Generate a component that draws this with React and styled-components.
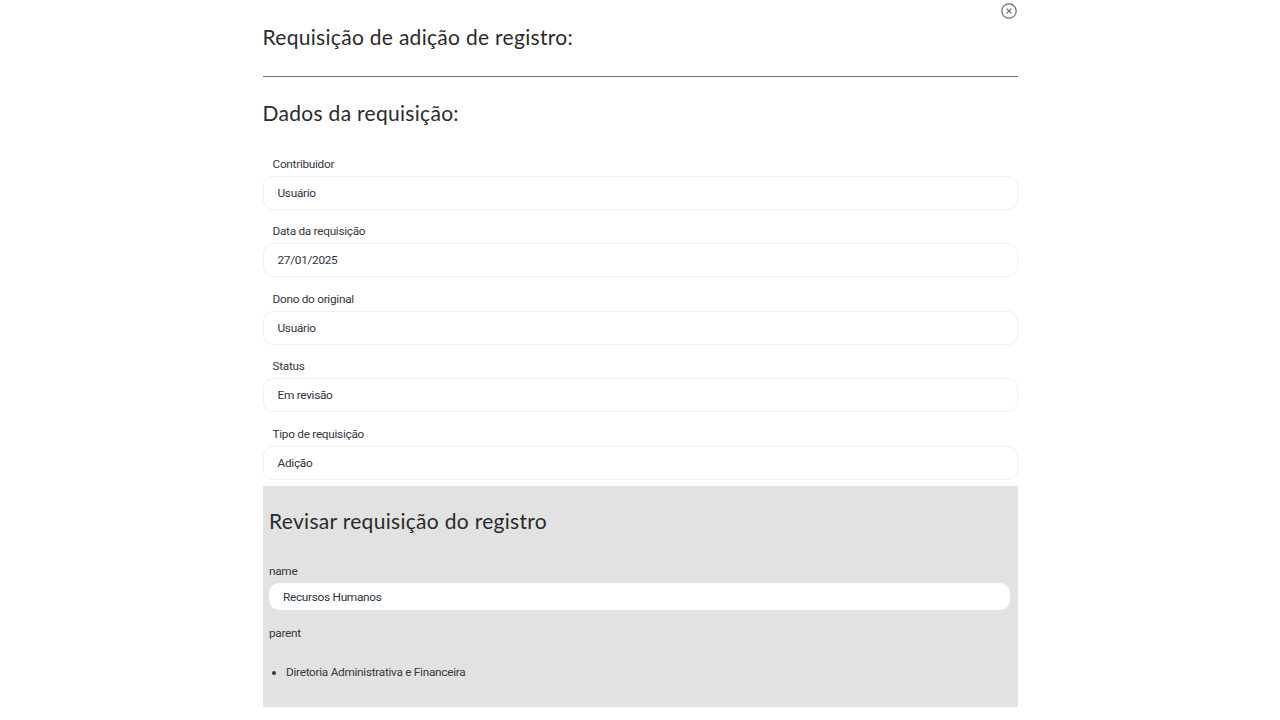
import React from 'react'
import styled, { createGlobalStyle } from 'styled-components'

const GlobalStyle = createGlobalStyle`
    html, body {
        margin: 0;
        padding: 0;
        background-color: #ffffff;
        overflow: hidden;
    }
`

const Page = styled.div`
    width: 1280px;
    height: 720px;
    display: flex;
    justify-content: center;
    overflow: hidden;
`

const Modal = styled.div`
    width: 755px;
    position: relative;
    display: flex;
    flex-direction: column;
`

const CloseButton = styled.button`
    position: absolute;
    top: 2px;
    right: 0;
    width: 18px;
    height: 18px;
    padding: 0;
    border: none;
    background: none;
    display: flex;
    cursor: pointer;
`

const Title = styled.h2`
    margin: 0;
    height: 77px;
    padding-top: 23px;
    box-sizing: border-box;
    font-family: "Lato", sans-serif;
    font-weight: 400;
    font-size: 21px;
    line-height: 27px;
    letter-spacing: 0.3px;
    color: #2b2b2b;
    border-bottom: 1px solid #6f7278;
`

const SectionTitle = styled.h3`
    margin: 0;
    padding-top: 22px;
    font-family: "Lato", sans-serif;
    font-weight: 400;
    font-size: 21px;
    line-height: 27px;
    letter-spacing: 0.3px;
    color: #2b2b2b;
`

const Fields = styled.div`
    display: flex;
    flex-direction: column;
    gap: 11.5px;
    padding-top: 27.5px;
`

const Field = styled.div`
    display: flex;
    flex-direction: column;
`

const Label = styled.label`
    padding-left: ${(props) => (props.$flush ? '0' : '10px')};
    margin-bottom: 2px;
    font-family: "Roboto", sans-serif;
    font-size: 11.8px;
    letter-spacing: -0.28px;
    line-height: 20px;
    color: #36383c;
`

const Input = styled.div`
    height: 32px;
    display: flex;
    align-items: center;
    padding-left: 14px;
    border: 1px solid #f0f0f0;
    border-radius: 10px;
    background-color: #ffffff;
    font-family: "Roboto", sans-serif;
    font-size: 11.8px;
    letter-spacing: -0.28px;
    color: #2c3440;
`

const ReviewPanel = styled.section`
    margin-top: 6.5px;
    height: 221px;
    padding: 0 7.5px 0 6.5px;
    background-color: #e2e2e2;
    display: flex;
    flex-direction: column;
`

const ReviewTitle = styled.h3`
    margin: 0;
    padding-top: 21px;
    font-family: "Lato", sans-serif;
    font-weight: 400;
    font-size: 21px;
    line-height: 27px;
    letter-spacing: 0.3px;
    color: #2b2b2b;
`

const ReviewField = styled.div`
    margin-top: 27px;
    display: flex;
    flex-direction: column;
`

const ReviewInput = styled.div`
    height: 27px;
    display: flex;
    align-items: center;
    padding-left: 14px;
    border-radius: 10px;
    background-color: #ffffff;
    font-family: "Roboto", sans-serif;
    font-size: 11.8px;
    letter-spacing: -0.28px;
    color: #2c3440;
`

const ParentLabel = styled(Label)`
    margin-top: 13px;
`

const ParentList = styled.ul`
    margin: 17px 0 0;
    padding-left: 17px;
    font-family: "Roboto", sans-serif;
    font-size: 11.8px;
    letter-spacing: -0.28px;
    line-height: 20px;
    color: #36383c;
`

const fields = [
    { label: 'Contribuidor', value: 'Usuário' },
    { label: 'Data da requisição', value: '27/01/2025' },
    { label: 'Dono do original', value: 'Usuário' },
    { label: 'Status', value: 'Em revisão' },
    { label: 'Tipo de requisição', value: 'Adição' },
]

const App = () => {
    return (
        <Page>
            <GlobalStyle />
            <Modal>
                <CloseButton aria-label="Fechar">
                    <svg width="18" height="18" viewBox="0 0 18 18" fill="none" stroke="#6b6b6b">
                        <circle cx="9" cy="9" r="7.2" strokeWidth="1.2" />
                        <path d="M6.6 6.6l4.8 4.8M11.4 6.6l-4.8 4.8" strokeWidth="1.2" />
                    </svg>
                </CloseButton>

                <Title>Requisição de adição de registro:</Title>
                <SectionTitle>Dados da requisição:</SectionTitle>

                <Fields>
                    {fields.map((item) => (
                        <Field key={item.label}>
                            <Label>{item.label}</Label>
                            <Input>{item.value}</Input>
                        </Field>
                    ))}
                </Fields>

                <ReviewPanel>
                    <ReviewTitle>Revisar requisição do registro</ReviewTitle>
                    <ReviewField>
                        <Label $flush>name</Label>
                        <ReviewInput>Recursos Humanos</ReviewInput>
                    </ReviewField>
                    <ParentLabel $flush>parent</ParentLabel>
                    <ParentList>
                        <li>Diretoria Administrativa e Financeira</li>
                    </ParentList>
                </ReviewPanel>
            </Modal>
        </Page>
    )
}

export default App
